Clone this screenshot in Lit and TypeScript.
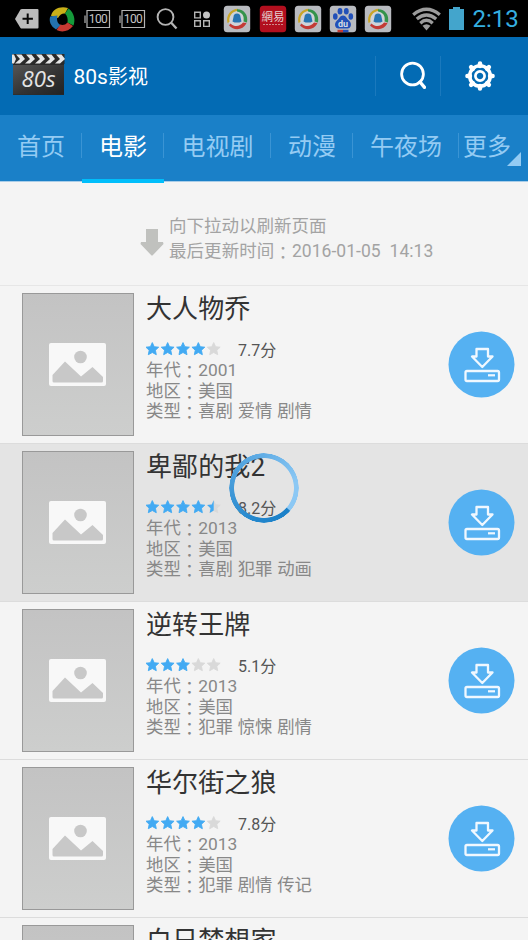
import { LitElement, html, svg, css } from "lit";
import { customElement, property } from "lit/decorators.js";

interface Movie {
  title: string;
  score: string;
  stars: number;
  year: string;
  area: string;
  genre: string;
}

const MOVIES: Movie[] = [
  { title: "大人物乔", score: "7.7", stars: 4, year: "2001", area: "美国", genre: "喜剧 爱情 剧情" },
  { title: "卑鄙的我2", score: "8.2", stars: 4.5, year: "2013", area: "美国", genre: "喜剧 犯罪 动画" },
  { title: "逆转王牌", score: "5.1", stars: 3, year: "2013", area: "美国", genre: "犯罪 惊悚 剧情" },
  { title: "华尔街之狼", score: "7.8", stars: 4, year: "2013", area: "美国", genre: "犯罪 剧情 传记" },
  { title: "白日梦想家", score: "7.7", stars: 4, year: "2013", area: "美国", genre: "喜剧 冒险" },
];

const FONT = css`
  :host {
    font-family: Roboto, "Noto Sans CJK SC", sans-serif;
  }
  svg {
    display: block;
    flex: none;
  }
  .colon {
    font-family: "Noto Sans CJK TC", sans-serif;
    line-height: 0;
    vertical-align: -1.500px;
  }
`;

@customElement("status-bar")
class StatusBar extends LitElement {
  static styles = [
    FONT,
    css`
      :host {
        display: flex;
        height: 37px;
        background: #000;
        padding-left: 9px;
        align-items: center;
      }
      .cell {
        width: 35.15px;
        display: flex;
        justify-content: center;
        flex: none;
      }
      .wifi {
        margin-left: 16px;
      }
      .battery {
        margin-left: 8px;
      }
      .time {
        margin-left: 9px;
        color: #35afe0;
        font-size: 24px;
        line-height: 37px;
        padding-top: 1px;
        white-space: nowrap;
      }
      .label {
        font-family: Roboto, sans-serif;
      }
      .cjk {
        font-family: "Noto Sans CJK TC", sans-serif;
      }
    `,
  ];

  private icon(body: unknown) {
    return html`<div class="cell"><svg width="28" height="28" viewBox="0 0 28 28">${body}</svg></div>`;
  }

  private plus() {
    return this.icon(svg`
      <path d="M2 14 7.500 4.500Q8 4 9 4H24.500Q25.500 4 25.500 5V22.500Q25.500 23.500 24.500 23.500H9Q8 23.500 7.500 23Z" fill="#bcbcbc"/>
      <path d="M14.700 8.500V19M9.500 13.800H19.900" stroke="#080808" stroke-width="2"/>`);
  }

  private pinwheel() {
    return this.icon(svg`
      <path d="M3 11C4.500 4 12 .8 20 3L17 8.500C15 8 12 9 10 13Z" fill="#c9b018"/>
      <path d="M20.500 3.500C26.500 8 27.500 15 25.500 20.500L19.500 17.500C20 14 19.500 11 17 8.500Z" fill="#159a3a"/>
      <path d="M25 21C20 27 13.500 27.500 8.500 25L12 19.500C14.500 20.500 17.500 20 19.500 17.500Z" fill="#c63a32"/>
      <path d="M8 24.500C2.500 21 .8 16 2.200 11.500L9.500 10.500C8.500 14.500 9 18 12.500 20Z" fill="#2472ae"/>`);
  }

  private percent() {
    return this.icon(svg`
      <path d="M4 5.500H26.500V22.500H4ZM2 10.500V18" fill="none" stroke="#b4b4b4" stroke-width="1.200"/>
      <text class="label" x="15.300" y="18.400" font-size="12" text-anchor="middle" fill="#c4c4c4" textLength="19">100</text>`);
  }

  private search() {
    return this.icon(svg`
      <circle cx="12.500" cy="12" r="7.900" fill="none" stroke="#b4b4b4" stroke-width="1.900"/>
      <path d="M18 17.500 23.500 23.500" stroke="#b4b4b4" stroke-width="2.300"/>`);
  }

  private grid() {
    return this.icon(svg`
      <path d="M6.700 7.300H12.300V12.900H6.700ZM6.700 15.800H12.300V21.400H6.700ZM15.700 15.800H21.300V21.400H15.700Z" fill="none" stroke="#b4b4b4" stroke-width="1.400"/>
      <circle cx="18.500" cy="10" r="3.500" fill="#c4c4c4"/>`);
  }

  private swirl() {
    return this.icon(svg`
      <rect x=".8" y=".8" width="26.400" height="26.400" rx="3.500" fill="#b9bbc0"/>
      <circle cx="14" cy="14" r="9" fill="#d0d3d8"/>
      <path d="M4.500 18C2.500 10 8 4 15 3.800L14 6C9 7 5.500 11 6.500 17Z" fill="#c9a528"/>
      <path d="M14 4.200C21 4 25.500 10 24 17.500L20.500 16.500C21.500 11 19.500 7.500 14 6.500Z" fill="#35934b"/>
      <path d="M23.500 18C20 25.500 11 26 6 20.500L7.500 18.500C12 22.500 17 21.500 20 17.500Z" fill="#c33a35"/>
      <path d="M10.500 12A3.500 3.500 0 0 1 17.500 12L18.500 16.500 16.500 17.500H11.500L9.500 16.500Z" fill="#2875b2"/>`);
  }

  private netease() {
    return this.icon(svg`
      <rect x=".8" y=".8" width="26.400" height="26.400" rx="3.500" fill="#b20f1e"/>
      <text class="cjk" x="14" y="16" font-size="11.500" text-anchor="middle" fill="#e4d2d2">網易</text>
      <path d="M4 19.500H24" stroke="#d08a8a" stroke-width="1" stroke-dasharray="2 1"/>`);
  }

  private paw() {
    return this.icon(svg`
      <rect x=".8" y=".8" width="26.400" height="26.400" rx="3.500" fill="#b9bbc0"/>
      <g fill="#2250b8">
        <ellipse cx="6.300" cy="11.500" rx="2.300" ry="3.200"/>
        <ellipse cx="11" cy="6.200" rx="2.400" ry="3.300"/>
        <ellipse cx="17.300" cy="6.200" rx="2.400" ry="3.300"/>
        <ellipse cx="21.800" cy="11.500" rx="2.300" ry="3.200"/>
        <path d="M14 10.500C17 10.500 17.500 13.500 20 15.500C23.500 18.500 22 24 18 23.500H10C6 24 4.500 18.500 8 15.500C10.500 13.500 11 10.500 14 10.500Z"/>
      </g>
      <text class="label" x="14" y="22" font-size="9" font-weight="700" text-anchor="middle" fill="#d8dce4">du</text>
      <path d="M8.500 26H14" stroke="#c33a35" stroke-width="2.400"/><path d="M14 26H19.500" stroke="#2250b8" stroke-width="2.400"/>`);
  }

  render() {
    return html`
      ${this.plus()}${this.pinwheel()}${this.percent()}${this.percent()}${this.search()}${this.grid()}
      ${this.swirl()}${this.netease()}${this.swirl()}${this.paw()}${this.swirl()}
      <svg class="wifi" width="29" height="24" viewBox="0 0 29 24">
        <g fill="none" stroke="#9b9b9b" stroke-width="3.300">
          <path d="M1.200 7.800Q14.500-3.200 27.800 7.800"/>
          <path d="M4.800 12Q14.500 4 24.200 12"/>
          <path d="M8.300 16.200Q14.500 10.500 20.700 16.200"/>
        </g>
        <path d="M10.500 18.800Q14.500 15.500 18.500 18.800L14.500 23.500Z" fill="#9b9b9b"/>
      </svg>
      <svg class="battery" width="15" height="24" viewBox="0 0 15 24">
        <path d="M4 0H11V2H15V23H0V2H4Z" fill="#43a5cc"/>
      </svg>
      <span class="time">2:13</span>
    `;
  }
}

@customElement("app-header")
class AppHeader extends LitElement {
  static styles = [
    FONT,
    css`
      :host {
        display: flex;
        height: 78px;
        background: #036bb4;
        align-items: center;
        padding-left: 12px;
      }
      .name {
        flex: 1;
        margin-left: 8.500px;
        padding-top: 2px;
        color: #fff;
        font-size: 20px;
        line-height: 30px;
      }
      .name .latin {
        font-size: 21px;
      }
      .logo {
        margin-top: -3px;
      }
      .action {
        width: 65px;
        height: 40px;
        box-sizing: border-box;
        border-left: 1px solid #1a79bd;
        display: flex;
        align-items: center;
        justify-content: center;
      }
      .action.find {
        padding-left: 3px;
      }
      .action.last {
        width: 88px;
        padding-right: 9px;
      }
      .art {
        font-family: "Open Sans", "Noto Sans", sans-serif;
        font-style: italic;
      }
    `,
  ];

  render() {
    const stripes = [0, 1, 2, 3, 4];
    const teeth = [0, 45, 90, 135, 180, 225, 270, 315];
    return html`
      <svg class="logo" width="53" height="41" viewBox="0 0 53 41">
        <defs>
          <linearGradient id="slate" x1="0" y1="0" x2="1" y2="1">
            <stop offset="0" stop-color="#555"/><stop offset=".55" stop-color="#333"/><stop offset="1" stop-color="#222"/>
          </linearGradient>
        </defs>
        <path d="M0 0H52.500V10H52V41H1V10H0Z" fill="#2a2a2a"/>
        <rect x="1" y="11" width="51" height="29.500" fill="url(#slate)"/>
        <path d="M0 .5H2L4 5 2 9.500H0Z" fill="#e6e6e6"/>
        ${stripes.map((i) => svg`<path d="M${4 + i * 10} .5H${9.500 + i * 10}L${13 + i * 10} 5L${8 + i * 10} 9.500H${3 + i * 10}L${8 + i * 10} 5Z" fill="#e6e6e6"/>`)}
        <text class="art" x="9.500" y="32.500" font-size="21.500" fill="#e4e4e4" textLength="34" lengthAdjust="spacingAndGlyphs">80s</text>
      </svg>
      <span class="name"><span class="latin">80s</span>影视</span>
      <div class="action find">
        <svg width="32" height="32" viewBox="0 0 32 32" fill="none" stroke="#fff">
          <circle cx="18.500" cy="14" r="10.900" stroke-width="2.800"/>
          <path d="M26 22 30.500 27.300" stroke-width="3.400" stroke-linecap="round"/>
        </svg>
      </div>
      <div class="action last">
        <svg width="30" height="30" viewBox="-15 -15 30 30" fill="none" stroke="#fff">
          ${teeth.map((a) => svg`<path d="M0-10V-12.600" transform="rotate(${a})" stroke-width="4.400" stroke-linecap="round"/>`)}
          <circle r="10.300" stroke-width="3.600"/>
          <circle r="4.600" stroke-width="2.700"/>
        </svg>
      </div>
    `;
  }
}

@customElement("tab-bar")
class TabBar extends LitElement {
  static styles = [
    FONT,
    css`
      :host {
        display: grid;
        grid-template-columns: 82px 82px 107px 82px 106px 69px;
        height: 67px;
        background: #1a80c8;
        border-bottom: 1px solid #a9cde8;
        box-sizing: border-box;
      }
      .tab {
        position: relative;
        display: flex;
        justify-content: center;
        color: #94cbf3;
        font-size: 24px;
        line-height: 64px;
        white-space: nowrap;
        box-sizing: border-box;
        border-bottom: 4px solid transparent;
      }
      .tab:not(:last-child)::after {
        content: "";
        position: absolute;
        right: 0;
        top: 18px;
        height: 25px;
        width: 1px;
        background: #3a94d4;
      }
      .active {
        color: #fff;
        border-bottom-color: #00befb;
      }
      .more {
        justify-content: flex-start;
        padding-left: 4px;
      }
      .corner {
        position: absolute;
        right: 7px;
        top: 37px;
      }
    `,
  ];

  render() {
    const tabs = ["首页", "电影", "电视剧", "动漫", "午夜场"];
    return html`
      ${tabs.map((t, i) => html`<div class="tab ${i === 1 ? "active" : ""}">${t}</div>`)}
      <div class="tab more">
        更多
        <svg class="corner" width="14" height="14" viewBox="0 0 14 14"><path d="M14 0V14H0Z" fill="#94cbf3"/></svg>
      </div>
    `;
  }
}

@customElement("movie-row")
class MovieRow extends LitElement {
  @property({ attribute: false }) movie!: Movie;

  static styles = [
    FONT,
    css`
      :host {
        display: flex;
        height: 158px;
        box-sizing: border-box;
        padding: 7px 13px 0 22px;
        border-bottom: 1px solid #dcdcdc;
        background: #f4f4f4;
      }
      :host(.pressed) {
        background: #e4e4e4;
      }
      .poster {
        width: 112px;
        height: 143px;
        box-sizing: border-box;
        border: 1px solid #999;
        background: linear-gradient(#c3c3c3, #cdcecd);
        display: flex;
        align-items: center;
        justify-content: center;
        flex: none;
      }
      .info {
        flex: 1;
        padding-left: 12px;
        white-space: nowrap;
        color: #888;
        font-size: 17.400px;
        word-spacing: 0.400px;
      }
      .title {
        color: #333;
        font-size: 26px;
        line-height: 32px;
        height: 46px;
        letter-spacing: 0.100px;
      }
      .rating {
        display: flex;
        align-items: center;
        height: 20px;
      }
      .rating svg {
        margin: -1px 0 0 -0.500px;
      }
      .score {
        margin-left: 17.500px;
        color: #555;
        font-size: 16px;
        line-height: 19px;
        padding-top: 2px;
      }
      .line {
        height: 20.700px;
        line-height: 22px;
      }
      .download {
        align-self: center;
        margin-top: -7px;
      }
    `,
  ];

  private star(i: number) {
    const fill = Math.max(0, Math.min(1, this.movie.stars - i));
    const points = "7,0.6 8.900,4.700 13.400,5.200 10.100,8.200 11,12.700 7,10.500 3,12.700 3.900,8.200 .6,5.200 5.100,4.700";
    const color = fill === 1 ? "#42aaf3" : "#d9d9d9";
    return svg`<g transform="translate(${i * 15.35 - 0.7} 0)">
      <polygon points=${points} fill=${color} stroke=${color} stroke-width=".9" stroke-linejoin="round"/>
      ${fill === 0.5 ? svg`<polygon points="7,0.300 7,10.500 3,12.900 3.900,8.200 .4,5 5.100,4.600" fill="#42aaf3"/>` : ""}
    </g>`;
  }

  private line(label: string, value: string) {
    return html`<div class="line">${label}<span class="colon">：</span>${value}</div>`;
  }

  render() {
    const m = this.movie;
    return html`
      <div class="poster">
        <svg width="58" height="43" viewBox="0 0 58 43">
          <rect x="0" y="0" width="57" height="43" rx="2" fill="#f8f8f8"/>
          <circle cx="31.500" cy="14" r="6.300" fill="#c8c8c8"/>
          <path d="M3.500 32 16 18.500 32 33.500 43.500 24 54 34V38Q54 39.500 52.500 39.500H5Q3.500 39.500 3.500 38Z" fill="#c8c8c8"/>
        </svg>
      </div>
      <div class="info">
        <div class="title">${m.title}</div>
        <div class="rating">
          <svg width="75" height="14" viewBox="0 0 75 14">${[0, 1, 2, 3, 4].map((i) => this.star(i))}</svg>
          <span class="score">${m.score}分</span>
        </div>
        ${this.line("年代", m.year)}${this.line("地区", m.area)}${this.line("类型", m.genre)}
      </div>
      <svg class="download" width="67" height="67" viewBox="0 0 67 67" fill="none" stroke="#f0f8ff" stroke-width="2.300" stroke-linejoin="round">
        <circle cx="33.500" cy="33.500" r="33" fill="#55b1f2" stroke="none"/>
        <path d="M28.500 18H40V25.500H44.500L34.300 36 24 25.500H28.500Z"/>
        <rect x="17.500" y="40" width="33.500" height="10" rx="1.500"/>
        <path d="M40 44.300H47" stroke-width="2.200"/>
      </svg>
    `;
  }
}

@customElement("app-root")
class AppRoot extends LitElement {
  static styles = [
    FONT,
    css`
      :host {
        display: block;
        position: relative;
        width: 528px;
        height: 940px;
        overflow: hidden;
        background: #f4f4f4;
      }
      .refresh {
        height: 104px;
        box-sizing: border-box;
        border-bottom: 1px solid #e6e6e6;
        padding: 32px 0 0 140px;
        display: flex;
        gap: 5px;
        color: #a3a3a3;
        font-size: 17.500px;
        line-height: 24.500px;
        white-space: pre;
      }
      .arrow {
        margin-top: 15px;
      }
      .stamp {
        letter-spacing: 0.05px;
      }
      .spinner {
        position: absolute;
        left: 229px;
        top: 453px;
        width: 70px;
        height: 70px;
        border-radius: 50%;
        background: conic-gradient(#62aee6 0deg, #8cc8f4 80deg, #8cc8f4 130deg, #1a80c8 132deg, #2286cc 190deg, #4a9edb 290deg, #62aee6 360deg);
        mask: radial-gradient(circle, transparent 29.500px, #000 30.300px, #000 34.600px, transparent 35px);
      }
    `,
  ];

  render() {
    return html`
      <status-bar></status-bar>
      <app-header></app-header>
      <tab-bar></tab-bar>
      <div class="refresh">
        <svg class="arrow" width="24" height="27" viewBox="0 0 24 27">
          <path d="M6 0H18V13H23L23.500 15 12.500 26.500H11.500L.5 15 1 13H6Z" fill="#c0c1be"/>
        </svg>
        <div><div>向下拉动以刷新页面</div><div class="stamp">最后更新时间<span class="colon">：</span>2016-01-05  14:13</div></div>
      </div>
      ${MOVIES.map((m, i) => html`<movie-row class=${i === 1 ? "pressed" : ""} .movie=${m}></movie-row>`)}
      <div class="spinner"></div>
    `;
  }
}
